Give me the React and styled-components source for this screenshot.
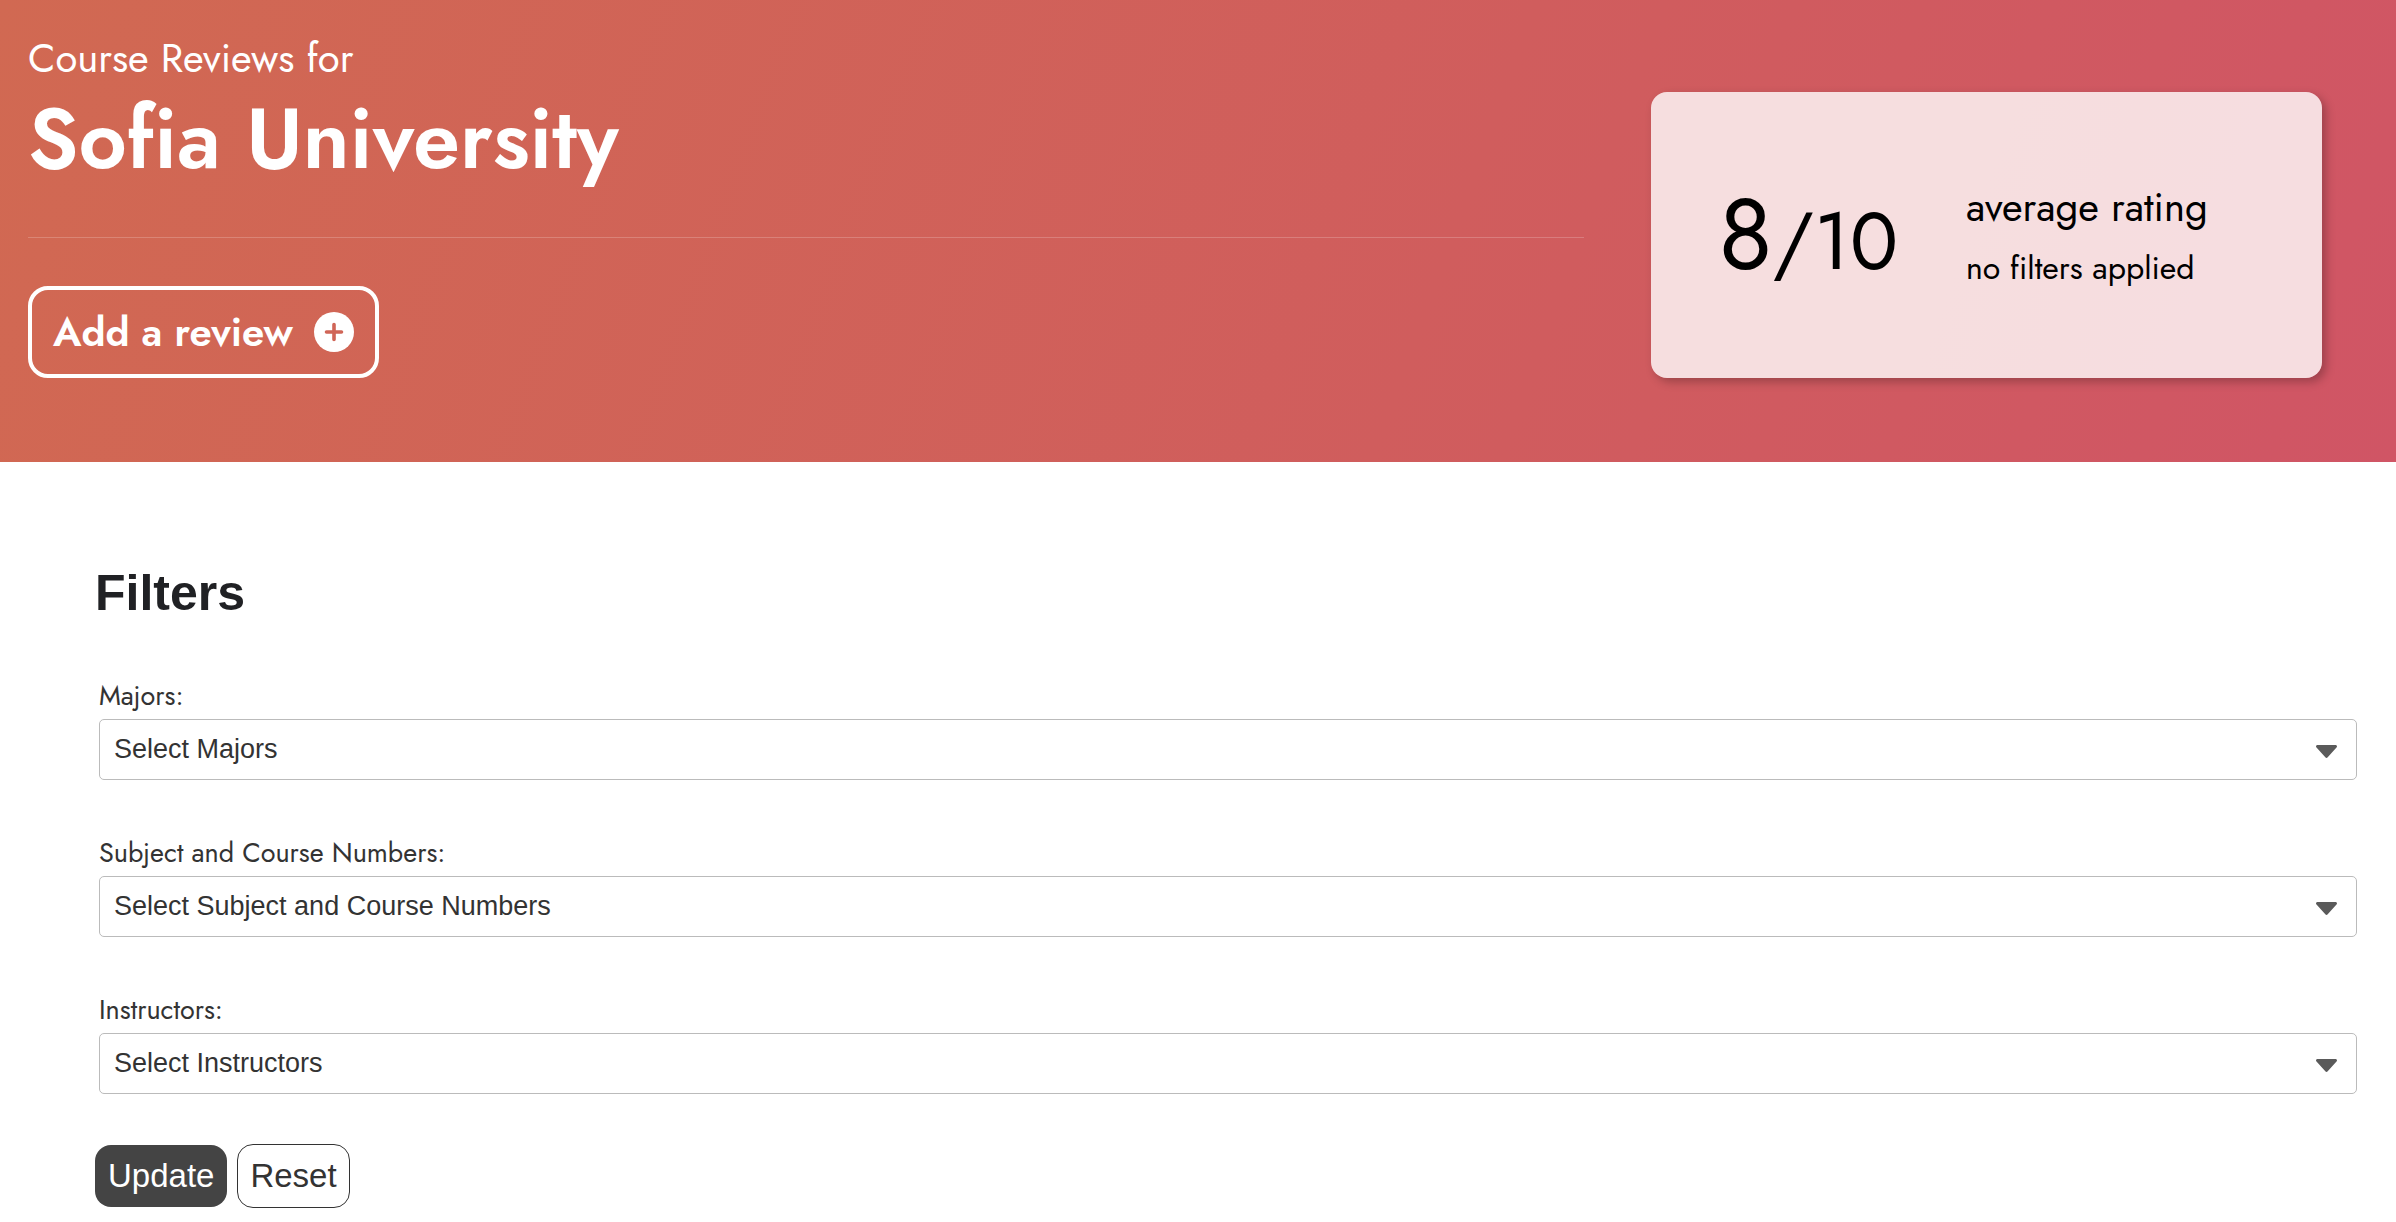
import React, { useState } from "react";
import styled, { createGlobalStyle } from "styled-components";

const GlobalStyle = createGlobalStyle`
  *, *::before, *::after {
    box-sizing: border-box;
  }

  body {
    margin: 0;
    background: #fff;
    color: #333;
    font-family: Jost, Lato, sans-serif;
  }
`;

const Header = styled.header`
  display: flex;
  gap: 67px;
  padding: 34px 74px 84px 28px;
  background: linear-gradient(110deg, #d16952, #d05d5d 60%, #d05565);
`;

const Intro = styled.div`
  flex: 1;
`;

const Eyebrow = styled.p`
  margin: 0;
  color: #fff;
  font-size: 40px;
  line-height: 48px;
`;

const Title = styled.h1`
  margin: 0;
  padding-bottom: 41px;
  border-bottom: 1px solid rgba(255, 255, 255, 0.2);
  color: #fff;
  font-size: 84px;
  font-weight: 600;
  line-height: 114px;
`;

const AddButton = styled.button`
  display: flex;
  align-items: center;
  gap: 21px;
  height: 92px;
  margin-top: 48px;
  padding: 0 21px;
  background: transparent;
  border: 4px solid #fff;
  border-radius: 20px;
  color: #fff;
  font-family: inherit;
  font-size: 40px;
  font-weight: 600;
  cursor: pointer;
`;

const RatingCard = styled.section`
  display: flex;
  align-items: center;
  gap: 68px;
  width: 28vw;
  margin-top: 58px;
  padding: 6px 67px 0;
  background: rgba(255, 255, 255, 0.8);
  border-radius: 16px;
  box-shadow: 4px 4px 10px rgba(0, 0, 0, 0.25);
  color: #000;
`;

const Score = styled.p`
  margin: 0;
  font-size: 80px;
  line-height: 120px;
  white-space: nowrap;

  strong {
    font-size: 100px;
    font-weight: 400;
  }
`;

const RatingText = styled.div`
  line-height: 61px;
  white-space: nowrap;
`;

const RatingLabel = styled.p`
  margin: 0;
  font-size: ${(props) => (props.$small ? "32px" : "40px")};
`;

const Filters = styled.form`
  padding: 99px 39px 14px 95px;
`;

const FiltersTitle = styled.h2`
  margin: 0 0 55px;
  color: #202124;
  font-family: Arial, "Liberation Sans", sans-serif;
  font-size: 50px;
  line-height: 64px;
`;

const Fields = styled.div`
  display: grid;
  gap: 57px;
  margin: 0 0 50px 4px;
`;

const FieldLabel = styled.label`
  display: block;
  margin-bottom: 7px;
  font-size: 27px;
  line-height: 32px;
`;

const SelectWrap = styled.div`
  display: grid;
  align-items: center;

  > * {
    grid-area: 1 / 1;
  }

  svg {
    justify-self: end;
    margin: 3px 20px 0 0;
    pointer-events: none;
  }
`;

const Select = styled.select`
  appearance: none;
  width: 100%;
  height: 61px;
  padding: 0 60px 2px 14px;
  background: #fff;
  border: 1px solid #bbb;
  border-radius: 5px;
  color: #333;
  font-family: Arial, "Liberation Sans", sans-serif;
  font-size: 27px;
`;

const Actions = styled.div`
  display: flex;
  align-items: center;
  gap: 10px;
`;

const ActionButton = styled.button`
  height: ${(props) => (props.$primary ? "62px" : "64px")};
  padding: 0 ${(props) => (props.$primary ? "13px" : "12px")};
  background: ${(props) => (props.$primary ? "#444" : "#fff")};
  border: ${(props) => (props.$primary ? "none" : "1px solid #333")};
  border-radius: 16px;
  color: ${(props) => (props.$primary ? "#fff" : "#333")};
  font-family: Arial, "Liberation Sans", sans-serif;
  font-size: 33px;
  cursor: pointer;
`;

const PlusIcon = () => (
  <svg width="40" height="40" viewBox="0 0 40 40" aria-hidden="true">
    <circle cx="20" cy="20" r="20" fill="#fff" />
    <path
      d="M20 12.5v15M12.5 20h15"
      stroke="#d06557"
      strokeWidth="3.6"
      strokeLinecap="round"
    />
  </svg>
);

const CaretIcon = () => (
  <svg width="21" height="13" viewBox="0 0 21 13" aria-hidden="true">
    <path
      d="M1.6 0h17.8c1.5 0 2.1 1.5 1.1 2.6l-8.8 9.7a1.6 1.6 0 0 1-2.4 0L.5 2.6C-.5 1.5.1 0 1.6 0z"
      fill="#5a5a5a"
    />
  </svg>
);

const filters = [
  { id: "majors", label: "Majors" },
  { id: "courses", label: "Subject and Course Numbers" },
  { id: "instructors", label: "Instructors" },
];

const emptyFilters = { majors: "", courses: "", instructors: "" };

const App = () => {
  const [selected, setSelected] = useState(emptyFilters);

  return (
    <>
      <GlobalStyle />
      <Header>
        <Intro>
          <Eyebrow>Course Reviews for</Eyebrow>
          <Title>Sofia University</Title>
          <AddButton type="button">
            Add a review <PlusIcon />
          </AddButton>
        </Intro>
        <RatingCard>
          <Score>
            <strong>8</strong>/10
          </Score>
          <RatingText>
            <RatingLabel>average rating</RatingLabel>
            <RatingLabel $small>no filters applied</RatingLabel>
          </RatingText>
        </RatingCard>
      </Header>
      <Filters onSubmit={(e) => e.preventDefault()}>
        <FiltersTitle>Filters</FiltersTitle>
        <Fields>
          {filters.map(({ id, label }) => (
            <div key={id}>
              <FieldLabel htmlFor={id}>{label}:</FieldLabel>
              <SelectWrap>
                <Select
                  id={id}
                  value={selected[id]}
                  onChange={(e) =>
                    setSelected({ ...selected, [id]: e.target.value })
                  }
                >
                  <option value="">Select {label}</option>
                </Select>
                <CaretIcon />
              </SelectWrap>
            </div>
          ))}
        </Fields>
        <Actions>
          <ActionButton type="submit" $primary>
            Update
          </ActionButton>
          <ActionButton type="button" onClick={() => setSelected(emptyFilters)}>
            Reset
          </ActionButton>
        </Actions>
      </Filters>
    </>
  );
};

export default App;
